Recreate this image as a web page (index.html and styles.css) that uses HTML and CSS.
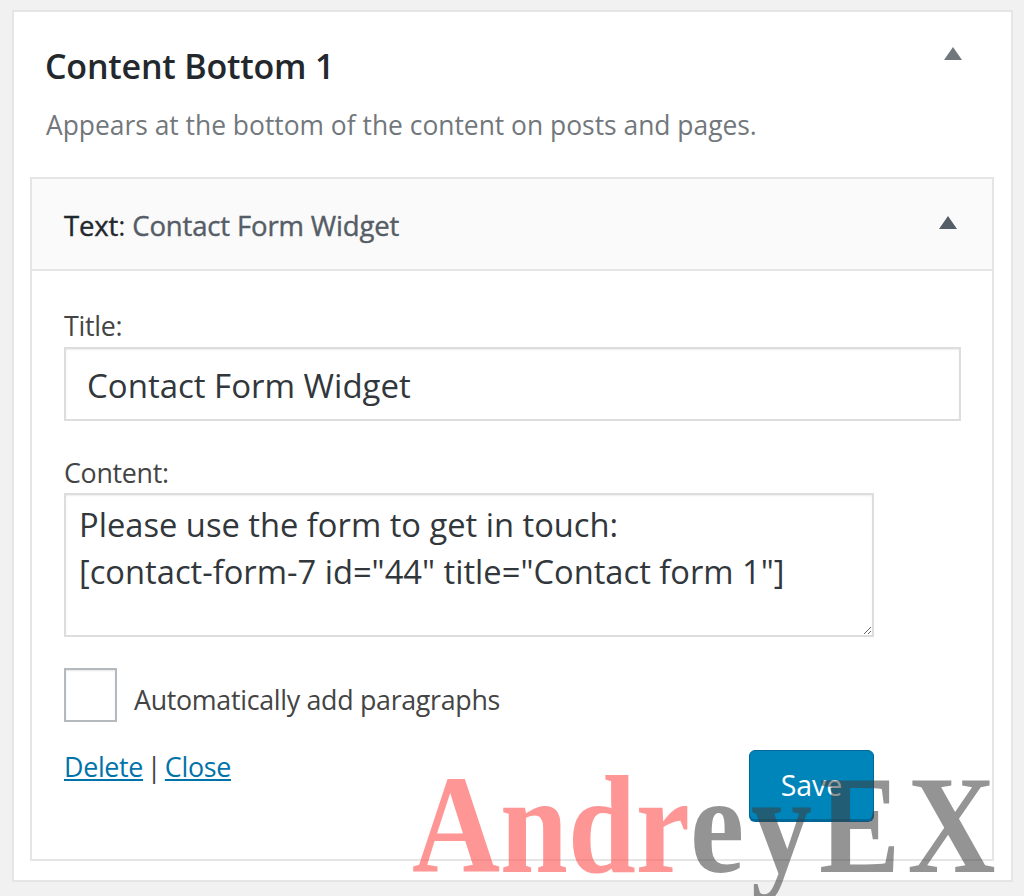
FILE: index.html
```html
<!DOCTYPE html>
<html lang="en">
<head>
    <meta charset="UTF-8">
    <meta name="viewport" content="width=device-width, initial-scale=1.0">
    <title>Widgets - Content Bottom 1</title>
    <link rel="stylesheet" href="styles.css">
</head>
<body>
    <div class="sidebar-box">
        <div class="sidebar-head">
            <h2 class="sidebar-name">Content Bottom 1</h2>
            <span class="arrow arrow-light"></span>
        </div>
        <p class="sidebar-desc">Appears at the bottom of the content on posts and pages.</p>

        <div class="widget">
            <div class="widget-head">
                <h3 class="widget-title">Text<span class="widget-colon">:</span> <span class="widget-name">Contact Form Widget</span></h3>
                <span class="arrow arrow-dark"></span>
            </div>
            <form class="widget-body">
                <label class="field-label" for="widgetTitle">Title:</label>
                <input type="text" id="widgetTitle" class="title-input" value="Contact Form Widget">

                <label class="field-label content-label" for="widgetContent">Content:</label>
                <textarea id="widgetContent" class="content-input">Please use the form to get in touch:
[contact-form-7 id="44" title="Contact form 1"]</textarea>

                <div class="check-row">
                    <input type="checkbox" id="autoP" class="check-box">
                    <label for="autoP" class="check-label">Automatically add paragraphs</label>
                </div>

                <div class="widget-actions">
                    <div class="action-links"><a href="#">Delete</a> | <a href="#">Close</a></div>
                    <button type="button" class="btn-save">Save</button>
                </div>
            </form>
        </div>
    </div>

    <div class="watermark"><span class="mark-red">Andr</span><span class="mark-grey">eyEX</span></div>
</body>
</html>
```

FILE: styles.css
```css
* {
    margin: 0;
    padding: 0;
    box-sizing: border-box;
}

html, body {
    height: 896px;
    overflow: hidden;
}

body {
    font-family: 'Open Sans', 'Noto Sans', sans-serif;
    background: #f1f1f1;
    color: #444;
    padding: 10px 11px 0 12px;
    position: relative;
}

.sidebar-box {
    background: white;
    border: 2px solid #e5e5e5;
    height: 872px;
    padding: 0 17px 0 16px;
}

.sidebar-head {
    display: flex;
    justify-content: space-between;
    align-items: flex-start;
    padding-right: 32px;
}

.sidebar-name {
    font-size: 34px;
    font-weight: 600;
    color: #23282d;
    line-height: 44px;
    margin: 32px 0 0 15px;
    letter-spacing: -0.2px;
}

.arrow {
    width: 0;
    height: 0;
    border-left: 9px solid transparent;
    border-right: 9px solid transparent;
    border-bottom: 13px solid #555d66;
}

.arrow-light {
    border-bottom-color: #72777c;
    margin-top: 35px;
}

.arrow-dark {
    margin-bottom: 3px;
}

.sidebar-desc {
    font-size: 26.4px;
    color: #72777c;
    line-height: 36px;
    margin: 19px 0 0 16px;
}

.widget {
    border: 2px solid #e5e5e5;
    margin-top: 34px;
    height: 684px;
}

.widget-head {
    height: 92px;
    background: #fafafa;
    border-bottom: 2px solid #e5e5e5;
    display: flex;
    justify-content: space-between;
    align-items: center;
    padding: 0 35px 0 32px;
}

.widget-title {
    font-size: 27.5px;
    font-weight: 400;
    -webkit-text-stroke: 0.4px;
    color: #23282d;
    letter-spacing: -0.15px;
    padding-top: 2px;
}

.widget-colon {
    -webkit-text-stroke: 0;
}

.widget-name {
    color: #555d66;
}

.widget-body {
    padding: 38px 32px 0;
}

.field-label {
    display: block;
    font-size: 26.8px;
    line-height: 34px;
    color: #444;
    letter-spacing: -0.3px;
}

.content-label {
    margin-top: 35px;
}

.title-input {
    display: block;
    width: 897px;
    height: 74px;
    margin-top: 4px;
    border: 2px solid #ddd;
    box-shadow: inset 0 1px 2px rgba(0,0,0,0.07);
    padding: 2px 21px 0;
    font-family: inherit;
    font-size: 33px;
    color: #32373c;
    outline: none;
}

.content-input {
    display: block;
    width: 810px;
    height: 144px;
    margin-top: 3px;
    border: 2px solid #ddd;
    box-shadow: inset 0 1px 2px rgba(0,0,0,0.07);
    padding: 6px 13px;
    font-family: inherit;
    font-size: 32.7px;
    line-height: 47px;
    color: #32373c;
    outline: none;
    overflow: hidden;
}

.check-row {
    display: flex;
    align-items: center;
    gap: 17px;
    margin-top: 31px;
    font-size: 26.8px;
    color: #444;
    letter-spacing: -0.3px;
}

.check-box {
    appearance: none;
    width: 53px;
    height: 54px;
    background: white;
    border: 2px solid #b4b9be;
    box-shadow: inset 0 1px 2px rgba(0,0,0,0.1);
}

.check-label {
    padding-top: 8px;
}

.widget-actions {
    display: flex;
    justify-content: space-between;
    align-items: flex-start;
    width: 810px;
    margin-top: 28px;
}

.action-links {
    font-size: 26.8px;
    line-height: 34px;
    letter-spacing: -0.3px;
    word-spacing: -3px;
}

.action-links a {
    color: #0073aa;
}

.btn-save {
    width: 125px;
    height: 70px;
    background: #0085ba;
    color: white;
    border: 1px solid #006799;
    border-radius: 6px;
    box-shadow: 0 2px 0 #006799;
    font-family: inherit;
    font-size: 28.5px;
    cursor: pointer;
}

/* site watermark, sits over the form */
.watermark {
    position: absolute;
    left: 412px;
    top: 756px;
    font-family: 'Liberation Serif', serif;
    font-size: 122px;
    font-weight: bold;
    line-height: 150px;
    white-space: nowrap;
    transform: scaleY(1.15);
    transform-origin: 0 116px;
    pointer-events: none;
}

.mark-red {
    color: rgba(255, 80, 80, 0.6);
}

.mark-grey {
    color: rgba(60, 60, 60, 0.55);
    letter-spacing: 7px;
}
```
